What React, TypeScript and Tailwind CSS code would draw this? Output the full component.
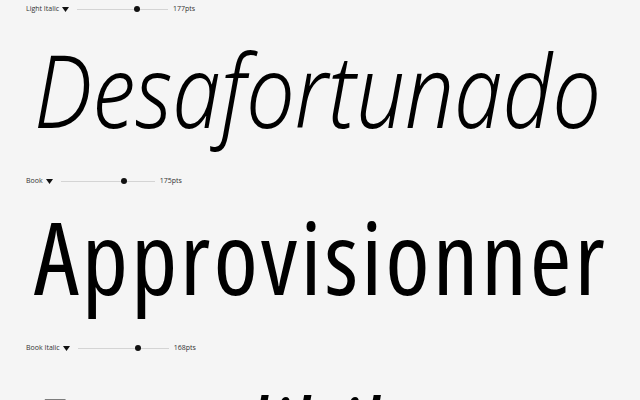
import React from "react";

function Control({ label, pts, lineW, pos }: { label: string; pts: string; lineW: number; pos: number }) {
  return (
    <div className="flex h-[18px] items-center pl-[26px] font-['Open_Sans','Noto_Sans',sans-serif] text-[7px] text-[#333]">
      <span>{label}</span>
      <svg width="7" height="5" viewBox="0 0 7 5" className="ml-[3px]">
        <polygon points="0,0 7,0 3.5,5" fill="#111" />
      </svg>
      <div className="relative ml-[8px] h-[1px] bg-[#d4d4d4]" style={{ width: lineW }}>
        <div
          className="absolute top-1/2 h-[6px] w-[6px] -translate-x-1/2 -translate-y-1/2 rounded-full bg-[#111]"
          style={{ left: lineW * pos }}
        />
      </div>
      <span className="ml-[5px]">{pts}</span>
    </div>
  );
}

export default function App() {
  return (
    <div className="h-[400px] w-[640px] overflow-hidden bg-[#f5f5f5] font-['Open_Sans','Noto_Sans',sans-serif] text-black">
      <Control label="Light Italic" pts="177pts" lineW={91} pos={0.66} />
      <div className="mt-[20px] pl-[34px]">
        <div className="origin-left scale-x-[0.85] whitespace-nowrap font-['Noto_Sans','Open_Sans',sans-serif] text-[102px] font-light italic leading-none">
          Desafortunado
        </div>
      </div>
      <div className="mt-[32px]">
        <Control label="Book" pts="175pts" lineW={94} pos={0.67} />
      </div>
      <div className="mt-[16px] whitespace-nowrap pl-[34px] text-[101px] font-normal font-stretch-condensed leading-none tracking-[3px]">
        Approvisionner
      </div>
      <div className="mt-[32px]">
        <Control label="Book Italic" pts="168pts" lineW={91} pos={0.66} />
      </div>
      <div className="mt-[26px] pl-[34px]">
        <div className="origin-left scale-x-[0.846] whitespace-nowrap font-['Noto_Sans','Open_Sans',sans-serif] text-[98px] font-normal italic leading-none">
          Incredibilmente
        </div>
      </div>
    </div>
  );
}
